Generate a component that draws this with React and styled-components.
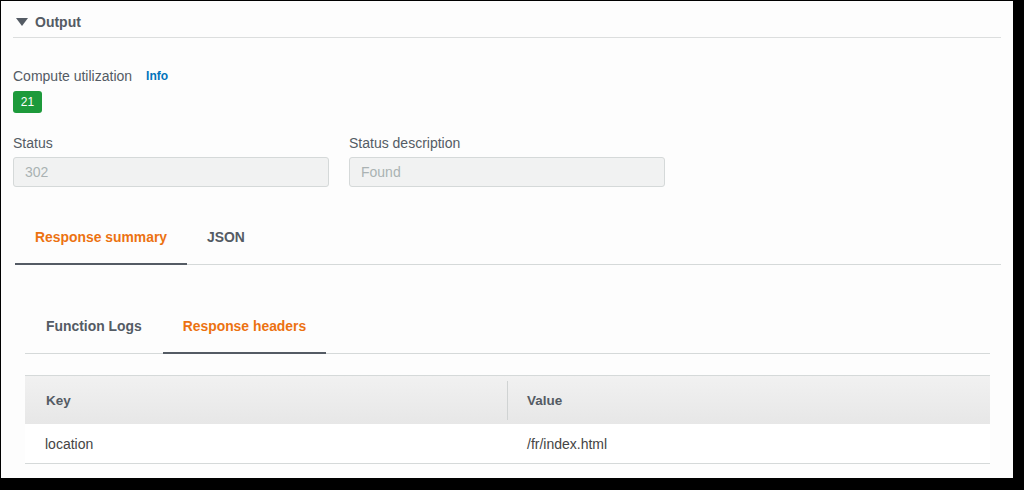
import styled, { createGlobalStyle } from 'styled-components';

const GlobalStyle = createGlobalStyle`
  html, body {
    margin: 0;
    padding: 0;
    background: #000;
  }
  body {
    font-family: "Liberation Sans", Arial, Helvetica, sans-serif;
    -webkit-font-smoothing: antialiased;
  }
`;

const Frame = styled.div`
  width: 1024px;
  height: 490px;
  box-sizing: border-box;
  padding: 1px 11px 12px 1px;
  background: #000;
`;

const Panel = styled.div`
  height: 100%;
  background: #fdfdfd;
  padding: 0 12px 0 12px;
  box-sizing: border-box;
  overflow: hidden;
`;

const SectionHeader = styled.div`
  display: flex;
  align-items: center;
  gap: 7px;
  height: 37px;
  padding: 6px 0 0 3px;
  box-sizing: border-box;
  border-bottom: 1px solid #dcdede;
  color: #545b64;
  font-size: 14px;
  font-weight: 700;
`;

const Caret = styled.span`
  width: 0;
  height: 0;
  border-left: 6.5px solid transparent;
  border-right: 6.5px solid transparent;
  border-top: 8px solid #545b64;
`;

const Label = styled.div`
  display: flex;
  align-items: center;
  gap: 14px;
  height: 20px;
  font-size: 14px;
  color: #545b64;
  margin-top: ${({ $top }) => $top || 0}px;
`;

const InfoLink = styled.span`
  color: #0073bb;
  font-size: 12px;
  font-weight: 700;
`;

const Badge = styled.div`
  display: inline-flex;
  align-items: center;
  justify-content: center;
  width: 29px;
  height: 22px;
  margin-top: 5px;
  border-radius: 3px;
  background: #1d9a3b;
  color: #fff;
  font-size: 12px;
`;

const FieldRow = styled.div`
  display: grid;
  grid-template-columns: 316px 316px;
  column-gap: 20px;
  margin-top: 20px;
`;

const Field = styled.div`
  display: flex;
  flex-direction: column;
  gap: 4px;
`;

const Input = styled.div`
  height: 30px;
  box-sizing: border-box;
  display: flex;
  align-items: center;
  padding: 0 11px;
  background: #f1f2f2;
  border: 1px solid #d5d9d9;
  border-radius: 3px;
  color: #aab2b3;
  font-size: 14px;
`;

const TabList = styled.div`
  display: flex;
  margin: ${({ $margin }) => $margin};
  border-bottom: 1px solid #d5d9d9;
`;

const Tab = styled.div`
  position: relative;
  display: flex;
  align-items: center;
  height: 56px;
  box-sizing: border-box;
  padding: 2px ${({ $pad }) => $pad || 20}px 0;
  font-size: 13.9px;
  font-weight: 700;
  color: ${({ $active }) => ($active ? '#ec7211' : '#545b64')};
  border-bottom: 2px solid ${({ $active }) => ($active ? '#545b64' : 'transparent')};
  margin-bottom: -1px;

  & + &::before {
    content: '';
    position: absolute;
    left: 0;
    top: 13px;
    bottom: 11px;
    border-left: 1px solid #dcdede;
  }
`;

const Inner = styled.div`
  padding: 0 11px 0 12px;
`;

const Table = styled.div`
  margin-top: 21px;
  border-top: 1px solid #d5d9d9;
  border-bottom: 1px solid #d5d9d9;
`;

const HeadRow = styled.div`
  display: grid;
  grid-template-columns: 482px 1fr;
  height: 48px;
  align-items: center;
  background: linear-gradient(#f1f1f1, #e7e7e7);
`;

const HeadCell = styled.div`
  position: relative;
  padding-left: ${({ $pad }) => $pad}px;
  font-size: 13.5px;
  font-weight: 700;
  color: #545b64;

  &:nth-child(2)::before {
    content: '';
    position: absolute;
    left: 0;
    top: -12px;
    bottom: -12px;
    border-left: 1px solid #d0d3d3;
  }
`;

const BodyRow = styled.div`
  display: grid;
  grid-template-columns: 482px 1fr;
  height: 39px;
  align-items: center;
  background: #fff;
`;

const Cell = styled.div`
  padding-left: ${({ $pad }) => $pad}px;
  font-size: 14px;
  color: #444;
`;

export default function App() {
  return (
    <>
      <GlobalStyle />
      <Frame>
        <Panel>
          <SectionHeader>
            <Caret />
            Output
          </SectionHeader>

          <Label $top={28}>
            Compute utilization
            <InfoLink>Info</InfoLink>
          </Label>
          <Badge>21</Badge>

          <FieldRow>
            <Field>
              <Label>Status</Label>
              <Input>302</Input>
            </Field>
            <Field>
              <Label>Status description</Label>
              <Input>Found</Input>
            </Field>
          </FieldRow>

          <TabList $margin="22px 0 0 2px">
            <Tab $active>Response summary</Tab>
            <Tab>JSON</Tab>
          </TabList>

          <Inner>
            <TabList $margin="33px 0 0 0">
              <Tab $pad={21}>Function Logs</Tab>
              <Tab $pad={20} $active>Response headers</Tab>
            </TabList>

            <Table>
              <HeadRow>
                <HeadCell $pad={21}>Key</HeadCell>
                <HeadCell $pad={20}>Value</HeadCell>
              </HeadRow>
              <BodyRow>
                <Cell $pad={20}>location</Cell>
                <Cell $pad={20}>/fr/index.html</Cell>
              </BodyRow>
            </Table>
          </Inner>
        </Panel>
      </Frame>
    </>
  );
}
